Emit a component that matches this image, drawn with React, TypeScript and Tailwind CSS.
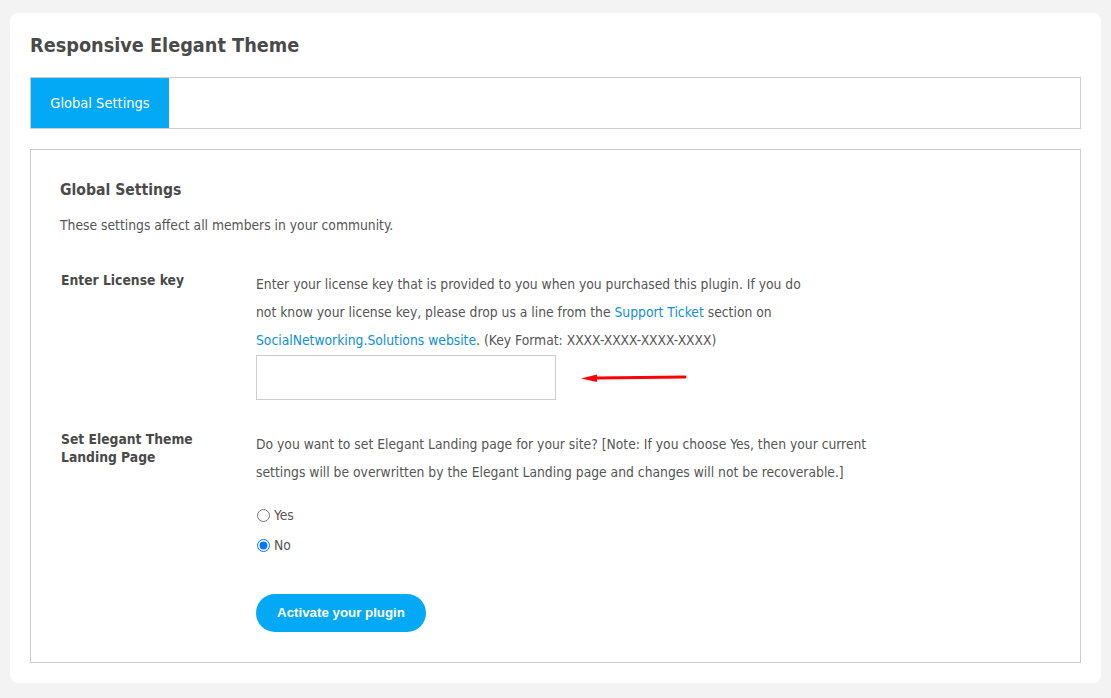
import React from "react";

export default function App() {
  const font = { fontFamily: '"DejaVu Sans Condensed", "DejaVu Sans", sans-serif' };
  return (
    <div className="min-h-[698px] bg-[#f3f3f3] pt-[13px] pb-[15px] px-[10px]" style={font}>
      <div className="bg-white rounded-[8px] px-[20px] pt-[19px] pb-[20px]">
        <h1 className="text-[19.7px] leading-[28px] font-bold text-[#4a4a4a] mb-[17px]">Responsive Elegant Theme</h1>
        <div className="border border-[#cccccc] h-[52px] flex">
          <div className="bg-[#03a9f4] text-white text-[14.5px] w-[138px] flex items-center justify-center pt-[2px]">Global Settings</div>
        </div>
        <div className="mt-[20px] border border-[#cccccc] px-[29px] pt-[28px] pb-[30px]">
          <h2 className="text-[15.6px] leading-[24px] font-bold text-[#4a4a4a]">Global Settings</h2>
          <p className="mt-[13px] text-[13.75px] leading-[20px] text-[#555555]">These settings affect all members in your community.</p>

          <div className="flex mt-[35px]">
            <div className="w-[196px] shrink-0 pl-[1px] pt-[2px] text-[13.75px] leading-[17px] font-bold text-[#4a4a4a]">Enter License key</div>
            <div>
              <p className="text-[13.75px] leading-[28px] text-[#555555]">
                Enter your license key that is provided to you when you purchased this plugin. If you do
                <br />
                not know your license key, please drop us a line from the <span className="text-[#0f8fd6]">Support Ticket</span> section on
                <br />
                <span className="text-[#0f8fd6]">SocialNetworking.Solutions website</span>. (Key Format: XXXX-XXXX-XXXX-XXXX)
              </p>
              <div className="flex items-center mt-[1px]">
                <input type="text" className="w-[300px] h-[45px] border border-[#cccccc] outline-none px-2 text-[13px]" />
                <svg width="106" height="10" viewBox="0 0 106 10" className="ml-[25px]">
                  <path d="M16 5 L104 4" stroke="#ff0000" strokeWidth="3" strokeLinecap="round" />
                  <path d="M0 5.5 L16 1.5 L16 9 Z" fill="#ff0000" />
                </svg>
              </div>
            </div>
          </div>

          <div className="flex mt-[30px]">
            <div className="w-[196px] shrink-0 pl-[1px] text-[13.75px] leading-[18px] font-bold text-[#4a4a4a]">
              Set Elegant Theme<br />Landing Page
            </div>
            <div>
              <p className="text-[13.75px] leading-[28px] text-[#555555]">
                Do you want to set Elegant Landing page for your site? [Note: If you choose Yes, then your current
                <br />
                settings will be overwritten by the Elegant Landing page and changes will not be recoverable.]
              </p>
              <div className="mt-[14px] text-[13.75px] text-[#555555]">
                <label className="flex items-center h-[30px]">
                  <input type="radio" name="landing" className="w-[13px] h-[13px] m-0 ml-[1px] mr-[4px]" />
                  Yes
                </label>
                <label className="flex items-center h-[30px]">
                  <input type="radio" name="landing" defaultChecked className="w-[13px] h-[13px] m-0 ml-[1px] mr-[4px] accent-[#0075ff]" />
                  No
                </label>
              </div>
              <button
                className="mt-[34px] w-[170px] h-[38px] rounded-full bg-[#03a9f4] text-white text-[13.3px] font-bold"
                style={{ fontFamily: '"Liberation Sans", Arial, sans-serif' }}
              >
                Activate your plugin
              </button>
            </div>
          </div>
        </div>
      </div>
    </div>
  );
}
